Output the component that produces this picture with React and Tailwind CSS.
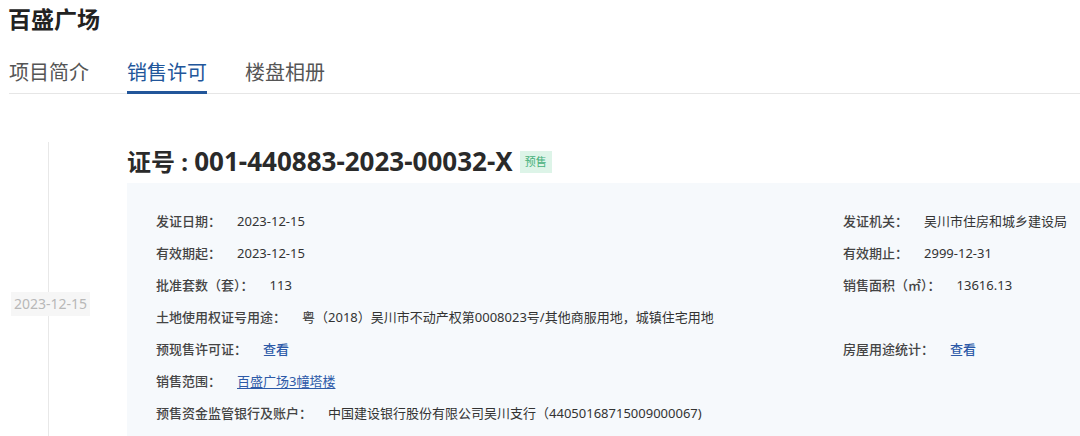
const font = { fontFamily: '"Noto Sans", "Noto Sans CJK SC", sans-serif' };

const Row = ({ label, value, link, underline, right }) => (
  <div className="flex h-8 items-center text-[13px]">
    <div className="flex w-[687px] items-center">
      <span className="font-medium text-[#444]">{label}：</span>
      <span
        className={
          "ml-4 " +
          (link ? "text-[#2d5aa8]" : "text-[#333]") +
          (underline ? " underline underline-offset-2" : "") +
          (link && !underline ? " font-medium" : "")
        }
      >
        {value}
      </span>
    </div>
    {right && (
      <div className="flex items-center">
        <span className="font-medium text-[#444]">{right.label}：</span>
        <span className={"ml-4 " + (right.link ? "font-medium text-[#2d5aa8]" : "text-[#333]")}>
          {right.value}
        </span>
      </div>
    )}
  </div>
);

export default function App() {
  return (
    <div className="h-[436px] w-[1080px] overflow-hidden bg-white" style={font}>
      <h1 className="pl-[8px] pt-[4px] text-[23px] font-bold leading-[30px] text-[#222]">百盛广场</h1>

      <div className="mt-[24px] ml-[9px] flex gap-[38px] border-b border-[#e6e6e6] text-[20px] leading-[30px]">
        <span className="pb-[5px] text-[#555]">项目简介</span>
        <span className="-mb-px border-b-[3px] border-[#22569a] pb-[2px] text-[#22569a]">销售许可</span>
        <span className="pb-[5px] text-[#555]">楼盘相册</span>
      </div>

      <div className="mt-[48px] flex">
        <div className="relative w-[127px] shrink-0">
          <div className="ml-[48px] h-[300px] w-px bg-[#e8e8e8]" />
          <div className="absolute left-[11px] top-[150px] bg-[#f6f6f6] px-[3px] text-[14px] leading-[24px] text-[#b8b8b8]">
            2023-12-15
          </div>
        </div>

        <div className="flex-1">
          <div className="flex h-[41px] items-center pb-[2px]">
            <span className="font-bold text-[#2a2a2a]">
              <span className="text-[24px]">证号 : </span>
              <span className="text-[26px]">001-440883-2023-00032-X</span>
            </span>
            <span className="ml-[7px] bg-[#ddf4e8] px-[5px] text-[11px] leading-[22px] text-[#46b07a]">预售</span>
          </div>
          <div className="bg-[#f6f9fc] pl-[29px] pt-[23px] pb-4">
            <Row label="发证日期" value="2023-12-15" right={{ label: "发证机关", value: "吴川市住房和城乡建设局" }} />
            <Row label="有效期起" value="2023-12-15" right={{ label: "有效期止", value: "2999-12-31" }} />
            <Row label="批准套数（套）" value="113" right={{ label: "销售面积（㎡）", value: "13616.13" }} />
            <Row label="土地使用权证号用途" value="粤（2018）吴川市不动产权第0008023号/其他商服用地，城镇住宅用地" />
            <Row label="预现售许可证" value="查看" link right={{ label: "房屋用途统计", value: "查看", link: true }} />
            <Row label="销售范围" value="百盛广场3幢塔楼" link underline />
            <Row label="预售资金监管银行及账户" value="中国建设银行股份有限公司吴川支行（44050168715009000067)" />
          </div>
        </div>
      </div>
    </div>
  );
}
